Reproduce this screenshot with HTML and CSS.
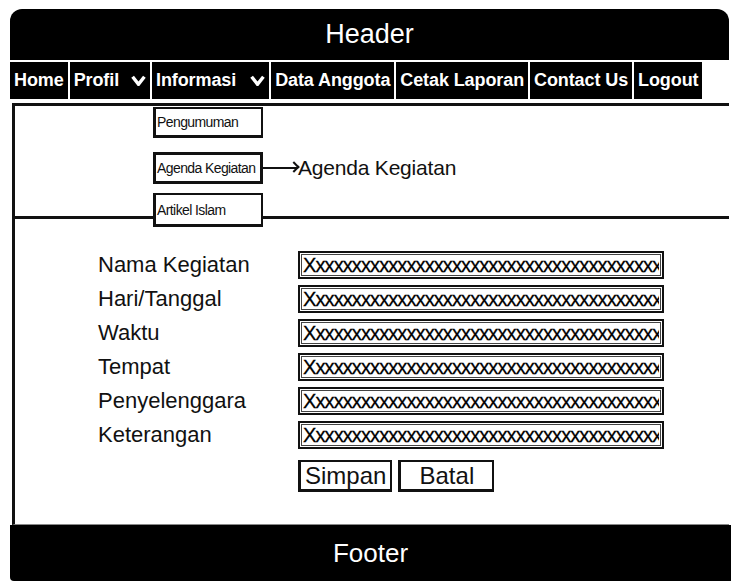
FILE: index.html
```html
<!DOCTYPE html>
<html lang="en">
<head>
    <meta charset="UTF-8">
    <meta name="viewport" content="width=device-width, initial-scale=1.0">
    <title>Agenda Kegiatan</title>
    <link rel="stylesheet" href="styles.css">
</head>
<body>
    <div class="page">
        <div class="header">Header</div>

        <ul class="nav">
            <li>Home</li>
            <li>Profil <svg class="chev" viewBox="0 0 14 10"><polyline points="1.5,1.5 7,8.5 12.5,1.5"/></svg></li>
            <li class="has-menu">Informasi <svg class="chev" viewBox="0 0 14 10"><polyline points="1.5,1.5 7,8.5 12.5,1.5"/></svg>
                <ul class="dropdown">
                    <li class="menu-1">Pengumuman</li>
                    <li class="menu-2">Agenda Kegiatan</li>
                    <li class="menu-3">Artikel Islam</li>
                </ul>
            </li>
            <li>Data Anggota</li>
            <li>Cetak Laporan</li>
            <li>Contact Us</li>
            <li>Logout</li>
        </ul>

        <div class="content">
            <div class="title-bar">
                <span class="arrow"></span>
                <span class="title">Agenda Kegiatan</span>
            </div>

            <form class="form">
                <label>Nama Kegiatan</label>
                <input type="text" value="Xxxxxxxxxxxxxxxxxxxxxxxxxxxxxxxxxxxxxxxxxxxxxxxxxxx" readonly>
                <label>Hari/Tanggal</label>
                <input type="text" value="Xxxxxxxxxxxxxxxxxxxxxxxxxxxxxxxxxxxxxxxxxxxxxxxxxxx" readonly>
                <label>Waktu</label>
                <input type="text" value="Xxxxxxxxxxxxxxxxxxxxxxxxxxxxxxxxxxxxxxxxxxxxxxxxxxx" readonly>
                <label>Tempat</label>
                <input type="text" value="Xxxxxxxxxxxxxxxxxxxxxxxxxxxxxxxxxxxxxxxxxxxxxxxxxxx" readonly>
                <label>Penyelenggara</label>
                <input type="text" value="Xxxxxxxxxxxxxxxxxxxxxxxxxxxxxxxxxxxxxxxxxxxxxxxxxxx" readonly>
                <label>Keterangan</label>
                <input type="text" value="Xxxxxxxxxxxxxxxxxxxxxxxxxxxxxxxxxxxxxxxxxxxxxxxxxxx" readonly>
                <div class="actions">
                    <button type="button">Simpan</button>
                    <button type="button" class="wide">Batal</button>
                </div>
            </form>
        </div>

        <div class="footer">Footer</div>
    </div>
</body>
</html>
```

FILE: styles.css
```css
body {
    margin: 0;
    background: #fff;
    font-family: "Liberation Sans", Arial, sans-serif;
    color: #111;
}
.page {
    margin: 9px 0 0 10px;
    width: 719px;
}
.header {
    background: #000;
    color: #fff;
    height: 51px;
    border-radius: 12px 12px 0 0;
    font-size: 27px;
    line-height: 50px;
    text-align: center;
}

/* menu */
.nav {
    list-style: none;
    margin: 2px 0 0 0;
    padding: 0;
    display: flex;
    gap: 2px;
}
.nav > li {
    background: #000;
    color: #fff;
    font-weight: bold;
    font-size: 18px;
    letter-spacing: -0.1px;
    height: 37px;
    padding: 0 4px;
    display: flex;
    align-items: center;
    white-space: nowrap;
}
.chev {
    width: 15px;
    height: 11px;
    margin-left: 12px;
    fill: none;
    stroke: #fff;
    stroke-width: 3.2;
}
.has-menu .chev { margin-left: 14px; }
.has-menu { position: relative; }
.dropdown {
    position: absolute;
    top: 45px;
    left: 1px;
    z-index: 2;
    list-style: none;
    margin: 0;
    padding: 0;
    width: 110px;
}
.dropdown li {
    background: #fff;
    color: #111;
    font-weight: normal;
    font-size: 14px;
    letter-spacing: -0.6px;
    border: 2px solid #111;
    border-left-width: 3px;
    border-bottom-width: 3px;
    padding: 0 1px;
    display: flex;
    align-items: center;
    box-sizing: border-box;
}
.menu-1 { height: 31px; }
.menu-2 { height: 32px; margin-top: 14px; border-width: 3px !important; }
.menu-3 { height: 34px; margin-top: 9px; }

/* content */
.content {
    margin-left: 2px;
    margin-top: 4px;
    border-top: 3px solid #111;
    border-left: 3px solid #111;
    border-bottom: 1px solid #888;
    height: 418px;
}
.title-bar {
    height: 113px;
    border-bottom: 3px solid #111;
    display: flex;
    align-items: center;
    padding: 14px 0 0 248px;
    box-sizing: border-box;
}
.arrow {
    position: relative;
    width: 35px;
    height: 2px;
    background: #111;
}
.arrow::after {
    content: "";
    position: absolute;
    right: 0;
    top: -4px;
    width: 8px;
    height: 8px;
    border-top: 2px solid #111;
    border-right: 2px solid #111;
    transform: rotate(45deg);
    box-sizing: border-box;
}
.title {
    font-size: 21px;
    letter-spacing: -0.2px;
}

.form {
    display: grid;
    grid-template-columns: 200px 366px;
    row-gap: 6px;
    padding: 32px 0 0 83px;
}
.form label {
    font-size: 22px;
    line-height: 28px;
}
.form input {
    height: 28px;
    box-sizing: border-box;
    border: 2px solid #111;
    box-shadow: inset 0 0 0 1px #fff, inset 0 0 0 2px #444;
    padding: 0 3px;
    font-family: "Liberation Sans", sans-serif;
    font-size: 20px;
    letter-spacing: -0.9px;
    -webkit-text-stroke: 0.3px #000;
    color: #000;
    outline: none;
}
.actions {
    grid-column: 2;
    display: flex;
    gap: 6px;
    margin-top: 5px;
}
.actions button {
    height: 32px;
    padding: 0 4px;
    background: #fff;
    color: #111;
    border: 2px solid #111;
    border-left-width: 3px;
    border-bottom-width: 3px;
    font-family: "Liberation Sans", sans-serif;
    font-size: 24px;
    line-height: 24px;
}
.actions .wide { width: 96px; }

.footer {
    background: #000;
    color: #fff;
    height: 56px;
    border-radius: 0 0 0 4px;
    font-size: 26px;
    line-height: 56px;
    text-align: center;
    width: 721px;
}
```
